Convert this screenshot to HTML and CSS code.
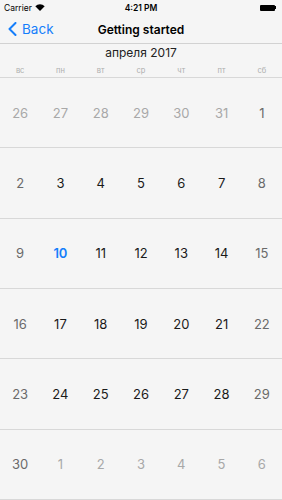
FILE: index.html
```html
<!DOCTYPE html>
<html lang="ru">
<head>
<meta charset="utf-8">
<link rel="stylesheet" href="styles.css">
</head>
<body>
<div class="screen">
  <div class="status">
    <div class="carrier">Carrier
      <svg class="wifi" width="10" height="7" viewBox="0 0 10 7"><path d="M5 7 L0.3 2.2 A6.8 6.8 0 0 1 9.7 2.2 Z" fill="#000"/></svg>
    </div>
    <div class="time">4:21 PM</div>
    <div class="battery"><span class="cell"></span><span class="nub"></span></div>
  </div>
  <div class="nav">
    <div class="back">
      <svg width="9" height="14" viewBox="0 0 9 14"><path d="M7.5 1 L1.5 7 L7.5 13" fill="none" stroke="#157efb" stroke-width="2" stroke-linecap="round" stroke-linejoin="round"/></svg>
      <span>Back</span>
    </div>
    <div class="title">Getting started</div>
  </div>
  <div class="header">
    <div class="month">апреля 2017</div>
    <div class="weekdays">
      <span>вс</span><span>пн</span><span>вт</span><span>ср</span><span>чт</span><span>пт</span><span>сб</span>
    </div>
  </div>
  <div class="grid">
    <div class="row"><span class="other">26</span><span class="other">27</span><span class="other">28</span><span class="other">29</span><span class="other">30</span><span class="other">31</span><span class="we">1</span></div>
    <div class="row"><span class="we">2</span><span>3</span><span>4</span><span>5</span><span>6</span><span>7</span><span class="we">8</span></div>
    <div class="row"><span class="we">9</span><span class="today">10</span><span>11</span><span>12</span><span>13</span><span>14</span><span class="we">15</span></div>
    <div class="row"><span class="we">16</span><span>17</span><span>18</span><span>19</span><span>20</span><span>21</span><span class="we">22</span></div>
    <div class="row"><span class="we">23</span><span>24</span><span>25</span><span>26</span><span>27</span><span>28</span><span class="we">29</span></div>
    <div class="row"><span class="we">30</span><span class="other">1</span><span class="other">2</span><span class="other">3</span><span class="other">4</span><span class="other">5</span><span class="other">6</span></div>
  </div>
</div>
</body>
</html>
```
FILE: styles.css
```css
* { box-sizing: border-box; }
html, body { margin: 0; padding: 0; }
body {
  background: #f5f5f5;
  font-family: Inter, "Noto Sans", sans-serif;
  color: #1a1a1a;
}
.screen {
  width: 282px;
  height: 500px;
  display: flex;
  flex-direction: column;
}
.status {
  height: 15px;
  display: grid;
  grid-template-columns: 1fr auto 1fr;
  align-items: center;
  padding: 0 4px;
  font-size: 8.5px;
}
.carrier { display: flex; align-items: center; gap: 3px; color: #000; }
.wifi { margin-top: -1px; }
.time { font-weight: 600; color: #000; }
.battery { justify-self: end; display: flex; align-items: center; margin-right: 2px; }
.battery .cell { width: 15px; height: 6px; background: #000; border-radius: 1px; }
.battery .nub { width: 1.5px; height: 3px; background: #000; }
.nav {
  height: 29px;
  border-bottom: 1px solid #d2d2d2;
  display: grid;
  grid-template-columns: 1fr auto 1fr;
  align-items: center;
  padding: 0 8px;
}
.back {
  display: flex;
  align-items: center;
  gap: 5px;
  color: #157efb;
  font-size: 13.5px;
}
.title {
  font-weight: 600;
  font-size: 12px;
  color: #000;
}
.header {
  padding-top: 1px;
  padding-bottom: 1px;
  border-bottom: 1px solid #d8d8d8;
}
.month {
  height: 16px;
  line-height: 16px;
  text-align: center;
  font-size: 12px;
  color: #222;
}
.weekdays {
  margin-top: 5px;
  height: 10px;
  line-height: 10px;
  display: grid;
  grid-template-columns: repeat(7, 1fr);
  text-align: center;
  font-size: 7.5px;
  color: #adadad;
}
.grid {
  flex: 1;
  display: flex;
  flex-direction: column;
}
.row {
  flex: 1;
  display: grid;
  grid-template-columns: repeat(7, 1fr);
  align-items: center;
  text-align: center;
  border-bottom: 1px solid #d8d8d8;
  font-size: 13px;
  color: #1a1a1a;
}
.row .we { color: #6a6a6a; }
.row .other { color: #a8a8a8; }
.row .today { color: #157efb; font-weight: 600; }
```
